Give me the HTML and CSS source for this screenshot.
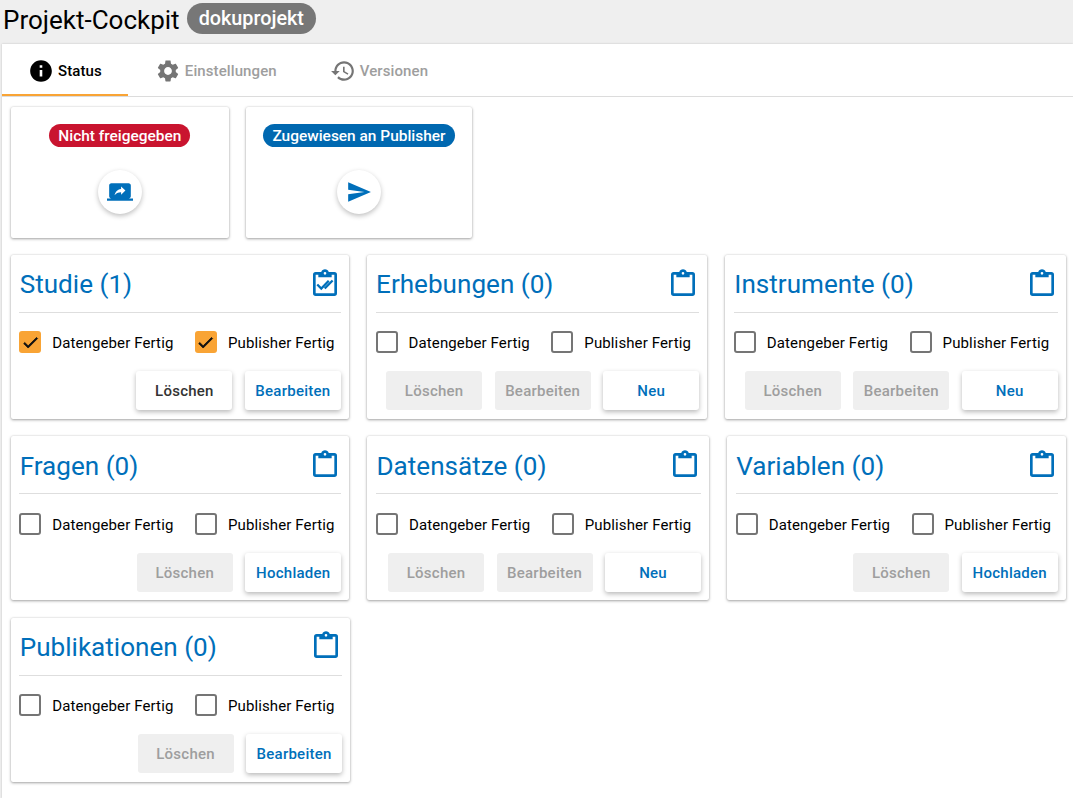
FILE: index.html
```html
<!DOCTYPE html>
<html lang="de">
<head>
    <meta charset="UTF-8">
    <meta name="viewport" content="width=device-width, initial-scale=1.0">
    <title>Projekt-Cockpit</title>
    <link rel="stylesheet" href="styles.css">
</head>
<body>
    <svg class="defs">
        <symbol id="ic-clip" viewBox="0 0 24 24"><path d="M19,3H14.82C14.4,1.84 13.3,1 12,1C10.7,1 9.6,1.84 9.18,3H5A2,2 0 0,0 3,5V19A2,2 0 0,0 5,21H19A2,2 0 0,0 21,19V5A2,2 0 0,0 19,3M12,3A1,1 0 0,1 13,4A1,1 0 0,1 12,5A1,1 0 0,1 11,4A1,1 0 0,1 12,3M7,7H17V5H19V19H5V5H7V7Z"/></symbol>
        <symbol id="ic-check" viewBox="0 0 24 24"><path d="M9 16.2 4.8 12l-1.4 1.4L9 19 21 7l-1.4-1.4z"/></symbol>
    </svg>

    <!-- header -->
    <div class="top">
        <h1 class="top-title">Projekt-Cockpit</h1>
        <span class="top-badge">dokuprojekt</span>
    </div>

    <div class="panel">
        <!-- tabs -->
        <div class="tabs">
            <div class="tab tab-active">
                <svg class="tab-icon" viewBox="0 0 24 24"><path d="M12 2C6.480 2 2 6.480 2 12s4.480 10 10 10 10-4.480 10-10S17.520 2 12 2zm1.200 15h-2.400v-6h2.400v6zm0-8h-2.400V6.800h2.400V9z"/></svg>
                Status
            </div>
            <div class="tab">
                <svg class="tab-icon" viewBox="0 0 24 24"><path d="M19.140,12.940c0.040-0.300,0.060-0.610,0.060-0.940c0-0.320-0.020-0.640-0.070-0.940l2.030-1.580c0.180-0.140,0.230-0.410,0.120-0.610l-1.920-3.320c-0.120-0.220-0.370-0.290-0.590-0.220l-2.390,0.960c-0.500-0.380-1.030-0.700-1.620-0.940L14.400,2.810c-0.040-0.240-0.240-0.410-0.480-0.410h-3.840c-0.240,0-0.430,0.170-0.470,0.410L9.250,5.350C8.660,5.590,8.120,5.920,7.630,6.290L5.240,5.330c-0.220-0.080-0.470,0-0.590,0.220L2.740,8.870C2.620,9.080,2.660,9.340,2.860,9.480l2.030,1.580C4.840,11.360,4.800,11.690,4.800,12s0.020,0.640,0.070,0.940l-2.030,1.580c-0.180,0.140-0.230,0.410-0.120,0.610l1.920,3.320c0.120,0.220,0.370,0.290,0.590,0.220l2.390-0.960c0.500,0.380,1.030,0.700,1.620,0.940l0.360,2.540c0.050,0.240,0.240,0.410,0.480,0.410h3.840c0.240,0,0.440-0.170,0.470-0.410l0.360-2.540c0.590-0.240,1.130-0.560,1.620-0.940l2.390,0.960c0.220,0.080,0.470,0,0.590-0.220l1.920-3.320c0.120-0.220,0.070-0.470-0.120-0.610L19.140,12.940z M12,15.600c-1.980,0-3.600-1.620-3.600-3.600s1.620-3.600,3.600-3.600s3.600,1.620,3.600,3.600S13.980,15.600,12,15.600z"/></svg>
                Einstellungen
            </div>
            <div class="tab">
                <svg class="tab-icon" viewBox="0 0 24 24"><path d="M13 3c-4.970 0-9 4.030-9 9H1l3.890 3.890.070.140L9 12H6c0-3.870 3.130-7 7-7s7 3.130 7 7-3.130 7-7 7c-1.930 0-3.680-.790-4.940-2.060l-1.420 1.420C8.270 19.990 10.510 21 13 21c4.970 0 9-4.030 9-9s-4.030-9-9-9zm-1 5v5l4.280 2.540.720-1.210-3.500-2.080V8H12z"/></svg>
                Versionen
            </div>
        </div>

        <div class="content">
            <!-- status -->
            <div class="status-row">
                <div class="card status-card status-one">
                    <span class="pill pill-red">Nicht freigegeben</span>
                    <div class="fab">
                        <svg viewBox="0 0 24 24"><path d="M20 18c1.100 0 1.990-.9 1.990-2L22 6c0-1.110-.9-2-2-2H4c-1.110 0-2 .89-2 2v10c0 1.100.89 2 2 2H0v2h24v-2h-4zm-7-3.530v-2.190c-2.780 0-4.610.85-6 2.720.56-2.670 2.110-5.330 6-5.870V7l4 3.730-4 3.740z"/></svg>
                    </div>
                </div>
                <div class="card status-card status-two">
                    <span class="pill pill-blue">Zugewiesen an Publisher</span>
                    <div class="fab">
                        <svg viewBox="0 0 24 24"><path d="M2.010 21 23 12 2.010 3 2 10l15 2-15 2z"/></svg>
                    </div>
                </div>
            </div>

            <!-- row 1 -->
            <div class="row row-a">
                <div class="card item">
                    <div class="item-head">
                        <h2 class="item-title">Studie (1)</h2>
                        <svg class="item-icon" viewBox="0 0 24 24"><use href="#ic-clip"/><path class="item-icon-check" d="M6.200 12.400l3 3 5.600-5.800M11.800 15.400l5.900-6"/></svg>
                    </div>
                    <div class="checks">
                        <label class="check"><span class="box box-on"><svg viewBox="0 0 24 24"><use href="#ic-check"/></svg></span>Datengeber Fertig</label>
                        <label class="check"><span class="box box-on"><svg viewBox="0 0 24 24"><use href="#ic-check"/></svg></span>Publisher Fertig</label>
                    </div>
                    <div class="btns">
                        <button class="btn btn-dark">Löschen</button>
                        <button class="btn">Bearbeiten</button>
                    </div>
                </div>
                <div class="card item">
                    <div class="item-head">
                        <h2 class="item-title">Erhebungen (0)</h2>
                        <svg class="item-icon"><use href="#ic-clip"/></svg>
                    </div>
                    <div class="checks">
                        <label class="check"><span class="box"></span>Datengeber Fertig</label>
                        <label class="check"><span class="box"></span>Publisher Fertig</label>
                    </div>
                    <div class="btns">
                        <button class="btn btn-off">Löschen</button>
                        <button class="btn btn-off">Bearbeiten</button>
                        <button class="btn">Neu</button>
                    </div>
                </div>
                <div class="card item">
                    <div class="item-head">
                        <h2 class="item-title">Instrumente (0)</h2>
                        <svg class="item-icon"><use href="#ic-clip"/></svg>
                    </div>
                    <div class="checks">
                        <label class="check"><span class="box"></span>Datengeber Fertig</label>
                        <label class="check"><span class="box"></span>Publisher Fertig</label>
                    </div>
                    <div class="btns">
                        <button class="btn btn-off">Löschen</button>
                        <button class="btn btn-off">Bearbeiten</button>
                        <button class="btn">Neu</button>
                    </div>
                </div>
            </div>

            <!-- row 2 -->
            <div class="row row-b">
                <div class="card item">
                    <div class="item-head">
                        <h2 class="item-title">Fragen (0)</h2>
                        <svg class="item-icon"><use href="#ic-clip"/></svg>
                    </div>
                    <div class="checks">
                        <label class="check"><span class="box"></span>Datengeber Fertig</label>
                        <label class="check"><span class="box"></span>Publisher Fertig</label>
                    </div>
                    <div class="btns">
                        <button class="btn btn-off">Löschen</button>
                        <button class="btn">Hochladen</button>
                    </div>
                </div>
                <div class="card item">
                    <div class="item-head">
                        <h2 class="item-title">Datensätze (0)</h2>
                        <svg class="item-icon"><use href="#ic-clip"/></svg>
                    </div>
                    <div class="checks">
                        <label class="check"><span class="box"></span>Datengeber Fertig</label>
                        <label class="check"><span class="box"></span>Publisher Fertig</label>
                    </div>
                    <div class="btns">
                        <button class="btn btn-off">Löschen</button>
                        <button class="btn btn-off">Bearbeiten</button>
                        <button class="btn">Neu</button>
                    </div>
                </div>
                <div class="card item">
                    <div class="item-head">
                        <h2 class="item-title">Variablen (0)</h2>
                        <svg class="item-icon"><use href="#ic-clip"/></svg>
                    </div>
                    <div class="checks">
                        <label class="check"><span class="box"></span>Datengeber Fertig</label>
                        <label class="check"><span class="box"></span>Publisher Fertig</label>
                    </div>
                    <div class="btns">
                        <button class="btn btn-off">Löschen</button>
                        <button class="btn">Hochladen</button>
                    </div>
                </div>
            </div>

            <!-- row 3 -->
            <div class="row row-c">
                <div class="card item">
                    <div class="item-head">
                        <h2 class="item-title">Publikationen (0)</h2>
                        <svg class="item-icon"><use href="#ic-clip"/></svg>
                    </div>
                    <div class="checks">
                        <label class="check"><span class="box"></span>Datengeber Fertig</label>
                        <label class="check"><span class="box"></span>Publisher Fertig</label>
                    </div>
                    <div class="btns">
                        <button class="btn btn-off">Löschen</button>
                        <button class="btn">Bearbeiten</button>
                    </div>
                </div>
            </div>
        </div>
    </div>
</body>
</html>
```

FILE: styles.css
```css
* {
    box-sizing: border-box;
    margin: 0;
}

html, body {
    height: 798px;
    overflow: hidden;
}

body {
    background-color: #efefef;
    font-family: Roboto, "Liberation Sans", sans-serif;
    color: #000;
}

.defs {
    display: none;
}

.top {
    height: 44px;
    display: flex;
    align-items: center;
    padding-left: 3px;
}

.top-title {
    font-size: 26px;
    font-weight: 400;
    line-height: 34px;
    margin-top: -5px;
}

.top-badge {
    margin-left: 7px;
    margin-top: -7px;
    height: 31px;
    line-height: 31px;
    padding: 0 12px;
    border-radius: 16px;
    background-color: #777;
    color: #fff;
    font-size: 19.8px;
    font-weight: 500;
}

.panel {
    margin-left: 2px;
    height: 754px;
    background-color: #fff;
    box-shadow: 0 0 2px rgba(0,0,0,0.2);
}

.tabs {
    display: flex;
    height: 53px;
    border-bottom: 1px solid #dcdcdc;
}

.tab {
    display: flex;
    align-items: center;
    height: 52px;
    padding: 2px 26px 0;
    font-size: 15px;
    letter-spacing: 0.1px;
    font-weight: 500;
    color: #9e9e9e;
}

.tab + .tab {
    margin-left: 1px;
}

.tab-active {
    color: #000;
    border-bottom: 2px solid #f9a435;
    padding-top: 4px;
}

.tab-icon {
    width: 26px;
    height: 26px;
    margin-right: 4px;
    fill: #757575;
}

.tab-active .tab-icon {
    fill: #000;
}

.content {
    padding: 10px 0 0 8.7px;
}

.card {
    background-color: #fff;
    border-radius: 2px;
    box-shadow: 0 1px 3px rgba(0,0,0,0.35), 0 0 2px rgba(0,0,0,0.12);
}

.status-row {
    display: flex;
    gap: 17px;
}

.status-card {
    height: 131px;
    display: flex;
    flex-direction: column;
    align-items: center;
    padding-top: 17px;
}

.status-one {
    width: 218.3px;
}

.status-two {
    width: 226px;
}

.pill {
    height: 23px;
    line-height: 24px;
    padding: 0 9px;
    border-radius: 12px;
    color: #fff;
    font-size: 15.45px;
    font-weight: 500;
    white-space: nowrap;
}

.pill-red {
    background-color: #c9142f;
}

.pill-blue {
    background-color: #0068b0;
}

.fab {
    width: 44px;
    height: 44px;
    margin-top: 23px;
    border-radius: 50%;
    background-color: #fff;
    box-shadow: 0 2px 5px rgba(0,0,0,0.25);
    display: flex;
    align-items: center;
    justify-content: center;
}

.fab svg {
    width: 26px;
    height: 26px;
    fill: #006fba;
}

.row {
    display: grid;
    column-gap: 18.2px;
}

.row-a {
    grid-template-columns: 338.2px 340.1px 340.4px;
    margin-top: 17px;
}

.row-b {
    grid-template-columns: 338.6px 341.6px 338.5px;
    margin-top: 17.4px;
}

.row-c {
    grid-template-columns: 339.4px;
    margin-top: 17.5px;
}

.item {
    height: 164px;
    padding: 0 8px 0 8.5px;
}

.item-head {
    height: 58px;
    display: flex;
    justify-content: space-between;
    align-items: center;
    border-bottom: 1px solid #dedede;
}

.item-title {
    font-size: 26.1px;
    font-weight: 400;
    color: #006fba;
    padding-left: 0.5px;
}

.row-b .item-title {
    padding-top: 2px;
}

.row-c .item-title {
    padding-top: 1px;
}

.item-icon {
    width: 32px;
    height: 32px;
    fill: #006fba;
}

.item-icon-check {
    fill: none;
    stroke: #006fba;
    stroke-width: 1.7;
}

.checks {
    display: flex;
    gap: 21.5px;
    margin-top: 18.2px;
}

.check {
    display: flex;
    align-items: center;
    font-size: 15px;
    letter-spacing: 0.12px;
    height: 22px;
    white-space: nowrap;
    padding-top: 1px;
}

.row-b .check {
    padding-top: 2px;
}

.box {
    width: 22px;
    height: 22px;
    margin-right: 11px;
    margin-top: -1px;
    border: 2px solid #757575;
    border-radius: 3px;
    display: flex;
    align-items: center;
    justify-content: center;
}

.row-b .box {
    margin-top: -2px;
}

.box-on {
    border: 0;
    background-color: #f9a435;
}

.box-on svg {
    width: 19px;
    height: 19px;
    fill: #111;
    stroke: #111;
    stroke-width: 1;
}

.btns {
    display: flex;
    justify-content: flex-end;
    gap: 12.5px;
    margin-top: 18px;
}

.btn {
    width: 96px;
    height: 39px;
    border: 0;
    border-radius: 3px;
    background-color: #fff;
    box-shadow: 0 2px 5px rgba(0,0,0,0.28);
    font-family: inherit;
    font-size: 15px;
    letter-spacing: 0.25px;
    font-weight: 500;
    color: #006fba;
}

.row-b .btn {
    padding-top: 2px;
}

.btn-dark {
    color: #333;
}

.btn-off {
    background-color: #efefef;
    box-shadow: none;
    color: #9e9e9e;
}
```
